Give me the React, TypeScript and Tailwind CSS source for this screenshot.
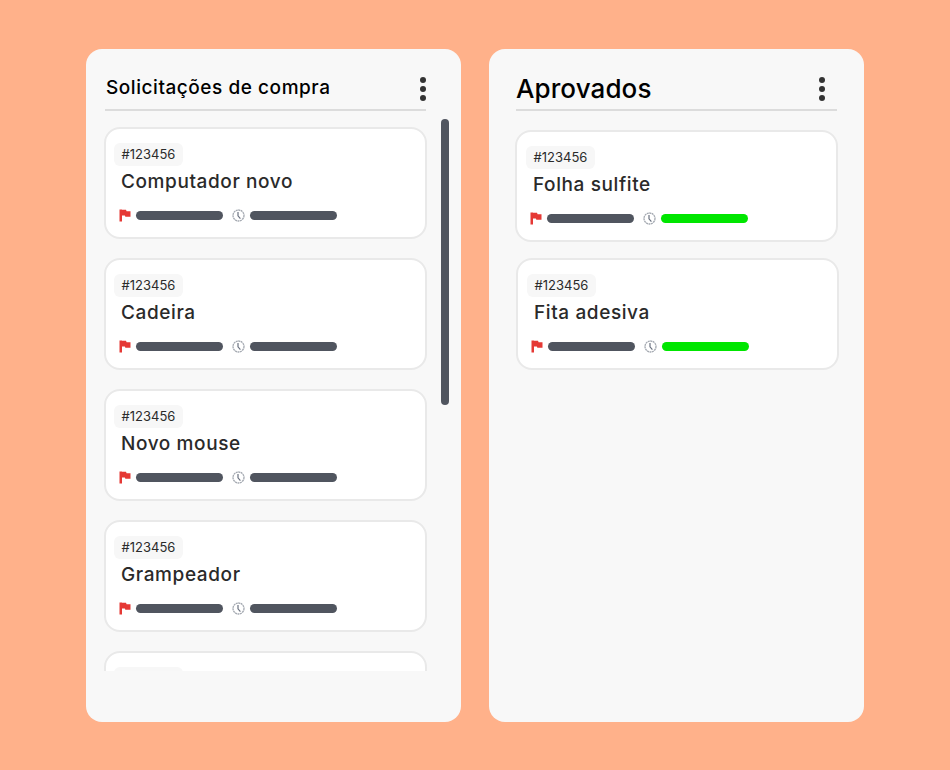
const FONT = "font-['Inter','Noto_Sans',sans-serif]"

function Flag() {
  return (
    <svg width="12" height="13" viewBox="0 0 12 13" className="shrink-0">
      <path d="M0.5 0.5H3V12.5H0.5Z M3 0.8H7L7.6 2.2H11.5V7.8H6.4L5.8 6.6H3Z" fill="#e53935" />
    </svg>
  )
}

function Clock() {
  return (
    <svg width="13" height="13" viewBox="0 0 13 13" fill="none" className="shrink-0">
      <circle cx="6.5" cy="6.5" r="5.5" stroke="#a3a8b0" strokeWidth="1.3" strokeDasharray="2 0.5" />
      <path d="M6 3V6.8L8.4 9.6" stroke="#6b7280" strokeWidth="1.2" />
    </svg>
  )
}

function Card({ title, done, className = '' }: { title?: string; done?: boolean; className?: string }) {
  return (
    <div className={`h-[112px] shrink-0 rounded-2xl border-2 border-[#e9e9e9] bg-white pt-[14px] pl-2 ${className}`}>
      <div className={`flex h-[23px] w-[69px] items-center justify-center rounded-md bg-[#f7f7f7] text-[13px] text-[#2b2b2b] ${done ? 'ml-px' : ''}`}>
        {title ? '#123456' : ''}
      </div>
      {title && (
        <>
          <div className={`mt-[3px] text-[19px] leading-[26px] font-medium tracking-[0.6px] text-[#2a2a2a] ${done ? 'ml-[8px]' : 'ml-[7px]'}`}>{title}</div>
          <div className="mt-[14px] ml-[5px] flex items-center">
            <Flag />
            <div className="ml-[5px] h-[9px] w-[87px] rounded-full bg-[#50555f]" />
            <div className="ml-[9px]"><Clock /></div>
            <div className={`ml-[5px] h-[9px] w-[87px] rounded-full ${done ? 'bg-[#00e600]' : 'bg-[#50555f]'}`} />
          </div>
        </>
      )}
    </div>
  )
}

function Dots() {
  return (
    <div className="flex flex-col gap-[3px]">
      <span className="h-[6px] w-[6px] rounded-full bg-[#333333]" />
      <span className="h-[6px] w-[6px] rounded-full bg-[#333333]" />
      <span className="h-[6px] w-[6px] rounded-full bg-[#333333]" />
    </div>
  )
}

export default function App() {
  return (
    <div className={`${FONT} flex h-[770px] w-[950px] justify-center gap-[28px] bg-[#ffb18a] pt-[49px]`}>
      {/* Solicitações */}
      <div className="relative h-[673px] w-[375px] rounded-2xl bg-[#f8f8f8] pt-[24px] pl-[18px]">
        <div className="ml-px flex h-[38px] w-[321px] items-center justify-between border-b-2 border-[#dcdcdc] pb-[5px]">
          <span className="ml-px text-[19px] font-medium tracking-[0.55px] text-black">Solicitações de compra</span>
          <Dots />
        </div>
        <div className="mt-[16px] flex h-[544px] w-[323px] flex-col gap-[19px] overflow-hidden">
          <Card title="Computador novo" />
          <Card title="Cadeira" />
          <Card title="Novo mouse" />
          <Card title="Grampeador" />
          <Card />
        </div>
        <div className="absolute top-[70px] left-[355px] h-[286px] w-2 rounded-full bg-[#50555f]" />
      </div>

      {/* Aprovados */}
      <div className="h-[673px] w-[375px] rounded-2xl bg-[#f8f8f8] pt-[24px] pl-[27px]">
        <div className="flex h-[38px] w-[321px] items-center justify-between border-b-2 border-[#dcdcdc] pr-[12px] pb-[5px]">
          <span className="text-[26px] font-medium tracking-[0.1px] text-black">Aprovados</span>
          <Dots />
        </div>
        <div className="mt-[19px] -ml-px flex w-[324px] flex-col gap-[16px]">
          <Card title="Folha sulfite" done className="w-[323px]" />
          <Card title="Fita adesiva" done className="ml-px w-[323px]" />
        </div>
      </div>
    </div>
  )
}
